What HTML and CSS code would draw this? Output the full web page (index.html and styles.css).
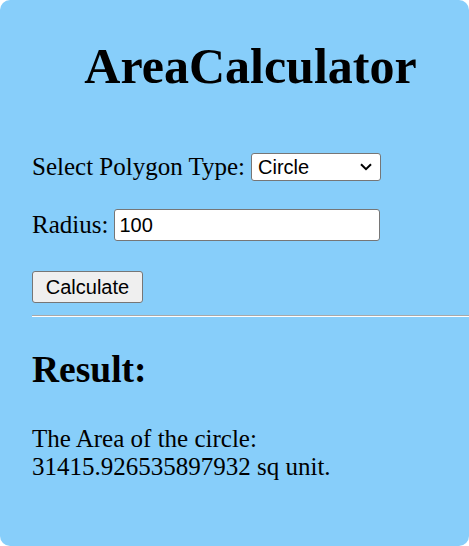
FILE: index.html
```html
<!DOCTYPE html>
<html>
<head>
<meta charset="utf-8">
<link rel="stylesheet" href="styles.css">
</head>
<body>
<div class="container">
  <h1 class="title">AreaCalculator</h1>
  <div class="form">
    <div class="row">
      <label class="lbl" for="type">Select Polygon Type:</label>
      <span class="select-wrap">
        <select id="type" class="select">
          <option>Circle</option>
          <option>Rectangle</option>
        </select>
        <svg class="chev" width="12" height="8" viewBox="0 0 12 8"><path d="M1 1.2 L6 6.2 L11 1.2" fill="none" stroke="#000" stroke-width="2"/></svg>
      </span>
    </div>
    <div class="row">
      <label class="lbl" for="radius">Radius:</label>
      <input id="radius" class="input" type="text" value="100">
    </div>
    <div class="row row-btn">
      <button class="btn">Calculate</button>
    </div>
  </div>
  <hr class="rule">
  <h2 class="result-title">Result:</h2>
  <p class="result">The Area of the circle:<br>31415.926535897932 sq unit.</p>
</div>
</body>
</html>
```
FILE: styles.css
```css
html, body {
  margin: 0;
  padding: 0;
  background: #ffffff;
}
.container {
  background: #87cefa;
  border-radius: 10px;
  height: 546px;
  box-sizing: border-box;
  padding: 7px 0 0 32px;
  font-family: "Liberation Serif", "Times New Roman", serif;
  font-size: 25px;
  color: #000;
}
.title {
  font-size: 50px;
  font-weight: bold;
  text-align: center;
  margin: 32px 0 0 0;
  line-height: 55px;
}
.form {
  display: flex;
  flex-direction: column;
  margin-top: 59px;
  gap: 28px;
}
.row {
  display: flex;
  align-items: center;
  gap: 6px;
}
.row-btn {
  margin-top: 2px;
}
.select-wrap {
  position: relative;
  display: inline-flex;
}
.select {
  appearance: none;
  -webkit-appearance: none;
  font-family: "Liberation Sans", Arial, sans-serif;
  font-size: 20px;
  color: #000;
  width: 130px;
  height: 28px;
  border: 1px solid #767676;
  border-radius: 3px;
  background: #fff;
  padding: 0 0 0 6px;
  margin: 0;
}
.chev {
  position: absolute;
  right: 9px;
  top: 10px;
  pointer-events: none;
}
.input {
  font-family: "Liberation Sans", Arial, sans-serif;
  font-size: 20px;
  color: #000;
  width: 266px;
  height: 32px;
  box-sizing: border-box;
  border: 1px solid #767676;
  border-radius: 3px;
  padding: 0 4px;
  margin: 0;
}
.btn {
  font-family: "Liberation Sans", Arial, sans-serif;
  font-size: 20px;
  color: #000;
  width: 111px;
  height: 32px;
  border: 1px solid #767676;
  border-radius: 3px;
  background: #efefef;
  padding: 0;
}
.rule {
  margin: 12px 0 0 0;
  border: none;
  border-top: 1px solid #a9a9a9;
  border-bottom: 1px solid #ffffff;
  height: 0;
}
.result-title {
  font-size: 37.5px;
  font-weight: bold;
  margin: 31px 0 0 0;
}
.result {
  margin: 34px 0 0 0;
  line-height: 28px;
}
```
